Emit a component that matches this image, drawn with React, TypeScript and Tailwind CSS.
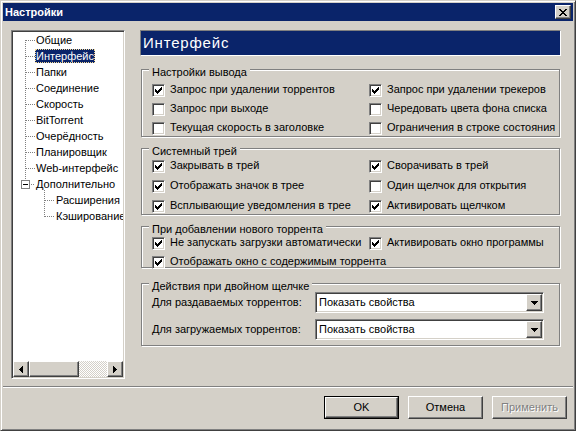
import React from "react";

const RAISED =
  "border border-t-white border-l-white border-r-[#404040] border-b-[#404040] shadow-[inset_-1px_-1px_0_#808080]";
const SUNKEN =
  "border border-t-[#808080] border-l-[#808080] border-r-white border-b-white shadow-[inset_1px_1px_0_#404040,inset_-1px_-1px_0_#d4d0c8]";

function Check() {
  return (
    <svg width="7" height="7" viewBox="0 0 7 7" shapeRendering="crispEdges">
      <path
        d="M0 2h1v3h-1z M1 3h1v3h-1z M2 4h1v3h-1z M3 3h1v3h-1z M4 2h1v3h-1z M5 1h1v3h-1z M6 0h1v3h-1z"
        fill="#000"
      />
    </svg>
  );
}

function CheckBox({ checked }: { checked: boolean }) {
  return (
    <span
      className={`w-[13px] h-[13px] shrink-0 bg-white flex items-center justify-center ${SUNKEN}`}
    >
      {checked && <Check />}
    </span>
  );
}

function Opt({ label, checked }: { label: string; checked: boolean }) {
  return (
    <div className="flex items-center gap-[5px] h-[19px] whitespace-nowrap">
      <CheckBox checked={checked} />
      <span className="leading-[13px] mb-[2px]">{label}</span>
    </div>
  );
}

function Group({
  title,
  className,
  children,
}: {
  title: string;
  className: string;
  children: React.ReactNode;
}) {
  return (
    <div
      className={`relative ml-[1px] w-[419px] border border-[#808080] shadow-[inset_1px_1px_0_#fff,1px_1px_0_#fff] ${className}`}
    >
      <span className="absolute left-[7px] top-[-4px] px-[3px] bg-[#d4d0c8] leading-[13px] whitespace-nowrap">
        {title}
      </span>
      {children}
    </div>
  );
}

function ArrowLeft() {
  return (
    <svg width="4" height="7" viewBox="0 0 4 7" shapeRendering="crispEdges">
      <path d="M0 3h1v1h-1z M1 2h1v3h-1z M2 1h1v5h-1z M3 0h1v7h-1z" fill="#000" />
    </svg>
  );
}
function ArrowRight() {
  return (
    <svg width="4" height="7" viewBox="0 0 4 7" shapeRendering="crispEdges">
      <path d="M0 0h1v7h-1z M1 1h1v5h-1z M2 2h1v3h-1z M3 3h1v1h-1z" fill="#000" />
    </svg>
  );
}
function ArrowDown() {
  return (
    <svg width="7" height="4" viewBox="0 0 7 4" shapeRendering="crispEdges">
      <path d="M0 0h7v1h-7z M1 1h5v1h-5z M2 2h3v1h-3z M3 3h1v1h-1z" fill="#000" />
    </svg>
  );
}
function CloseX() {
  return (
    <svg width="8" height="7" viewBox="0 0 8 7" shapeRendering="crispEdges">
      <path
        d="M0 0h2v1h-2z M6 0h2v1h-2z M1 1h2v1h-2z M5 1h2v1h-2z M2 2h4v1h-4z M3 3h2v1h-2z M2 4h4v1h-4z M1 5h2v1h-2z M5 5h2v1h-2z M0 6h2v1h-2z M6 6h2v1h-2z"
        fill="#000"
      />
    </svg>
  );
}

function Combo({ value }: { value: string }) {
  return (
    <div className={`w-[229px] h-[21px] bg-white p-[1px] flex ${SUNKEN}`}>
      <span className="flex-1 pl-[2px] leading-[17px] whitespace-nowrap">{value}</span>
      <span className={`w-[16px] h-full bg-[#d4d0c8] flex items-center justify-center ${RAISED}`}>
        <ArrowDown />
      </span>
    </div>
  );
}

type TreeItem = { label: string; child?: boolean; selected?: boolean };
const TREE: TreeItem[] = [
  { label: "Общие" },
  { label: "Интерфейс", selected: true },
  { label: "Папки" },
  { label: "Соединение" },
  { label: "Скорость" },
  { label: "BitTorrent" },
  { label: "Очерёдность" },
  { label: "Планировщик" },
  { label: "Web-интерфейс" },
  { label: "Дополнительно" },
  { label: "Расширения интерфейса", child: true },
  { label: "Кэширование", child: true },
];

function TreeLines() {
  const tops = [0, 1, 2, 3, 4, 5, 6, 7, 8].map((i) => 8 + 16 * i);
  return (
    <svg
      className="absolute left-0 top-0 pointer-events-none"
      width="110"
      height="329"
      viewBox="0 0 110 329"
      shapeRendering="crispEdges"
    >
      <g stroke="#808080" strokeWidth="1" strokeDasharray="1 1" fill="none">
        <line x1="12.5" y1="8" x2="12.5" y2="148" />
        {tops.map((y) => (
          <line key={y} x1="13" y1={y + 0.5} x2="22" y2={y + 0.5} />
        ))}
        <line x1="18" y1="152.5" x2="22" y2="152.5" />
        <line x1="31.5" y1="158" x2="31.5" y2="185" />
        <line x1="32" y1="168.5" x2="41" y2="168.5" />
        <line x1="32" y1="184.5" x2="41" y2="184.5" />
      </g>
      <rect x="8.5" y="148.5" width="8" height="8" fill="#fff" stroke="#808080" />
      <rect x="10" y="152" width="5" height="1" fill="#000" />
    </svg>
  );
}

function Tree() {
  return (
    <div className={`w-[114px] h-[349px] shrink-0 bg-white p-[1px] flex flex-col ${SUNKEN}`}>
      <div className="relative flex-1 overflow-hidden">
        <TreeLines />
        <div className="flex flex-col">
          {TREE.map((t) => (
            <div
              key={t.label}
              className={`h-[16px] flex items-center whitespace-nowrap ${t.child ? "pl-[42px]" : "pl-[22px]"}`}
            >
              <span
                className={`h-[14px] leading-[14px] px-[1px] ${
                  t.selected
                    ? "bg-[#0a246a] text-white outline outline-1 outline-dotted outline-[#f5db95] -outline-offset-1"
                    : ""
                }`}
              >
                {t.label}
              </span>
            </div>
          ))}
        </div>
      </div>
      <div className="h-[16px] flex shrink-0">
        <span className={`w-[16px] h-full bg-[#d4d0c8] flex items-center justify-center ${RAISED}`}>
          <ArrowLeft />
        </span>
        <span className={`w-[50px] h-full bg-[#d4d0c8] ${RAISED}`} />
        <span className="flex-1 h-full bg-[image:repeating-conic-gradient(#ffffff_0%_25%,#d4d0c8_0%_50%)] bg-[length:2px_2px]" />
        <span className={`w-[16px] h-full bg-[#d4d0c8] flex items-center justify-center ${RAISED}`}>
          <ArrowRight />
        </span>
      </div>
    </div>
  );
}

function DlgButton({
  label,
  def,
  disabled,
}: {
  label: string;
  def?: boolean;
  disabled?: boolean;
}) {
  const inner = (
    <span
      className={`w-full h-full flex items-center justify-center bg-[#d4d0c8] ${RAISED} ${
        disabled ? "text-[#808080] [text-shadow:1px_1px_0_#fff]" : "text-black"
      }`}
    >
      {label}
    </span>
  );
  if (def) {
    return (
      <div className="w-[75px] h-[23px] border border-black flex">{inner}</div>
    );
  }
  return <div className="w-[75px] h-[23px] flex">{inner}</div>;
}

export default function App() {
  return (
    <div className="w-[576px] h-[431px] bg-[#d4d0c8] font-['Liberation_Sans',Arial,sans-serif] text-[11px] text-black">
      <div className="w-full h-full border border-t-[#d4d0c8] border-l-[#d4d0c8] border-r-[#404040] border-b-[#404040] shadow-[inset_1px_1px_0_#fff,inset_-1px_-1px_0_#808080] p-[2px] flex flex-col">
        {/* Title bar */}
        <div className="h-[18px] shrink-0 bg-[#0a246a] flex items-center justify-between pl-[2px] pr-[2px]">
          <span className="text-white font-bold text-[11px] leading-[13px]">Настройки</span>
          <span className={`w-[16px] h-[14px] bg-[#d4d0c8] flex items-center justify-center ${RAISED}`}>
            <CloseX />
          </span>
        </div>

        {/* Main */}
        <div className="flex pt-[9px] pl-[8px]">
          <Tree />
          <div className="ml-[15px] w-[421px] flex flex-col">
            <div className="h-[26px] border border-t-[#808080] border-l-[#808080] border-r-white border-b-white bg-[#0a246a] text-white text-[15px] tracking-[0.8px] pl-[2px] flex items-center">
              Интерфейс
            </div>

            <Group title="Настройки вывода" className="mt-[13px] h-[68px] pt-[11px] pl-[10px]">
              <div className="grid grid-cols-[217px_1fr]">
                <Opt label="Запрос при удалении торрентов" checked />
                <Opt label="Запрос при удалении трекеров" checked />
                <Opt label="Запрос при выходе" checked={false} />
                <Opt label="Чередовать цвета фона списка" checked={false} />
                <Opt label="Текущая скорость в заголовке" checked={false} />
                <Opt label="Ограничения в строке состояния" checked={false} />
              </div>
            </Group>

            <Group title="Системный трей" className="mt-[11px] h-[67px] pt-[8px] pl-[10px]">
              <div className="grid grid-cols-[217px_1fr] gap-y-[1px]">
                <Opt label="Закрывать в трей" checked />
                <Opt label="Сворачивать в трей" checked />
                <Opt label="Отображать значок в трее" checked />
                <Opt label="Один щелчок для открытия" checked={false} />
                <Opt label="Всплывающие уведомления в трее" checked />
                <Opt label="Активировать щелчком" checked />
              </div>
            </Group>

            <Group title="При добавлении нового торрента" className="mt-[11px] h-[42px] pt-[7px] pl-[10px]">
              <div className="grid grid-cols-[217px_1fr]">
                <Opt label="Не запускать загрузки автоматически" checked />
                <Opt label="Активировать окно программы" checked />
                <Opt label="Отображать окно с содержимым торрента" checked />
              </div>
            </Group>

            <Group title="Действия при двойном щелчке" className="mt-[15px] h-[63px] pt-[8px] pl-[10px]">
              <div className="flex flex-col gap-y-[6px]">
                <div className="flex items-center">
                  <span className="w-[163px] whitespace-nowrap">Для раздаваемых торрентов:</span>
                  <Combo value="Показать свойства" />
                </div>
                <div className="flex items-center">
                  <span className="w-[163px] whitespace-nowrap">Для загружаемых торрентов:</span>
                  <Combo value="Показать свойства" />
                </div>
              </div>
            </Group>
          </div>
        </div>

        {/* Separator */}
        <div className="mt-[7px] h-[2px] shrink-0 border-t border-t-[#808080] border-b border-b-white" />

        {/* Buttons */}
        <div className="mt-[8px] flex justify-end gap-[9px] pr-[6px]">
          <DlgButton label="OK" def />
          <DlgButton label="Отмена" />
          <DlgButton label="Применить" disabled />
        </div>
      </div>
    </div>
  );
}
